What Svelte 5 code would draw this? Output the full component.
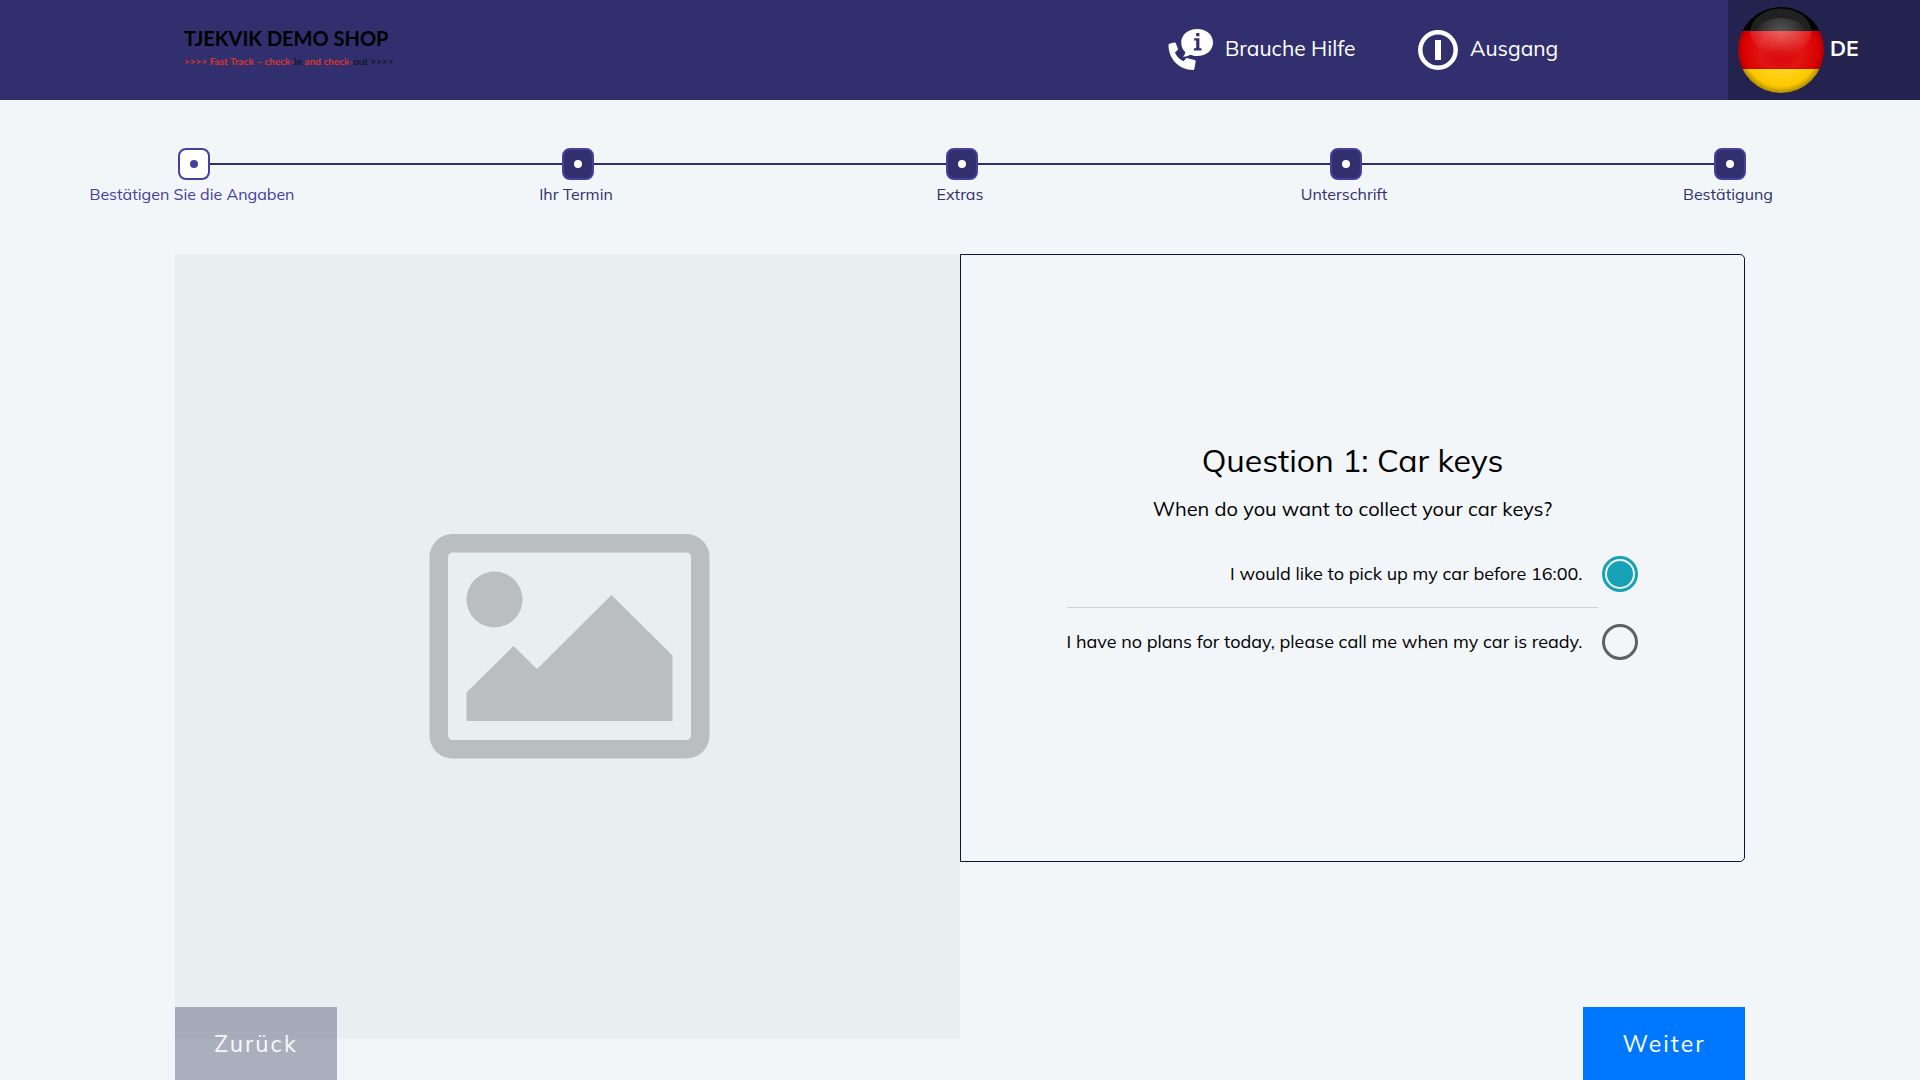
<script>
  const steps = ['Bestätigen Sie die Angaben', 'Ihr Termin', 'Extras', 'Unterschrift', 'Bestätigung'];
  const options = [
    'I would like to pick up my car before 16:00.',
    'I have no plans for today, please call me when my car is ready.'
  ];
  let current = $state(0);
  let choice = $state(0);
</script>

<header class="topbar">
  <div class="logo">
    <span class="logo-title">TJEKVIK DEMO SHOP</span>
    <span class="logo-tag">&gt;&gt;&gt;&gt; Fast Track – check-<i>in</i> and check-<i>out &gt;&gt;&gt;&gt;</i></span>
  </div>
  <nav class="actions">
    <button class="action" type="button">
      <svg width="45" height="42" viewBox="0 0 45 42" aria-hidden="true">
        <path fill="#fff" d="M29.200 0C38.300 0 45 5.800 45 13.500S38.300 27 29.200 27c-2.500 0-4.900-.4-7-1.300-1.800 1.200-4.500 2.100-7.300 2 1.200-1.200 2.200-2.800 2.500-4.500C14.600 20.800 13.200 17.300 13.200 13.500 13.200 5.800 20.100 0 29.200 0Z" />
        <path fill="#312f6e" d="M28.200 4h3.200v3.200h-3.200zM26.200 9.200h5.200v10h2.100v2.300h-7.600v-2.300h2.300v-7.600h-2z" />
        <path fill="#fff" d="M2 14.500 6.300 13.500c.8-.2 1.300.2 1.600.9l2 5.200c.2.700 0 1.200-.5 1.700l-2.500 2.200c1.800 4 4.700 6.900 8.700 8.700l2.300-2.600c.5-.5 1-.7 1.700-.4l7 1.900c.8.300 1.100.8 1 1.600l-1.200 7c-.2.800-.7 1.300-1.500 1.300C11.200 41 .5 30.300.5 16.100c0-.8.600-1.400 1.500-1.600Z" />
      </svg>
      <span>Brauche Hilfe</span>
    </button>
    <button class="action" type="button">
      <svg width="40" height="40" viewBox="0 0 40 40" aria-hidden="true">
        <circle cx="20" cy="20" r="17.700" fill="none" stroke="#fff" stroke-width="4.500" />
        <path fill="#fff" d="M17 10h6v20h-6z" />
      </svg>
      <span>Ausgang</span>
    </button>
  </nav>
  <button class="lang" type="button">
    <svg width="86" height="86" viewBox="0 0 86 86" aria-hidden="true">
      <defs>
        <clipPath id="disc"><circle cx="43" cy="43" r="43" /></clipPath>
        <radialGradient id="red" gradientUnits="userSpaceOnUse" cx="43" cy="43" r="43">
          <stop offset="0" stop-color="#d80000" />
          <stop offset="0.500" stop-color="#e11414" />
          <stop offset="0.850" stop-color="#dc0000" />
          <stop offset="1" stop-color="#ae0000" />
        </radialGradient>
        <radialGradient id="gold" gradientUnits="userSpaceOnUse" cx="43" cy="43" r="43">
          <stop offset="0.500" stop-color="#ffd21c" />
          <stop offset="0.850" stop-color="#fcc800" />
          <stop offset="1" stop-color="#b08c00" />
        </radialGradient>
        <linearGradient id="shine" gradientUnits="userSpaceOnUse" x1="0" y1="1" x2="0" y2="46">
          <stop offset="0" stop-color="#fff" stop-opacity="0.130" />
          <stop offset="0.500" stop-color="#fff" stop-opacity="0.130" />
          <stop offset="1" stop-color="#fff" stop-opacity="0" />
        </linearGradient>
        <radialGradient id="glow" gradientUnits="userSpaceOnUse" cx="43" cy="26" r="27">
          <stop offset="0" stop-color="#fff" stop-opacity="0.240" />
          <stop offset="0.450" stop-color="#fff" stop-opacity="0.140" />
          <stop offset="1" stop-color="#fff" stop-opacity="0" />
        </radialGradient>
      </defs>
      <g clip-path="url(#disc)">
        <path fill="#000" d="M0 0h86v24H0z" />
        <path fill="url(#red)" d="M0 24h86v38H0z" />
        <path fill="url(#gold)" d="M0 62h86v24H0z" />
        <path fill="#961000" opacity="0.500" d="M0 61h86v1H0z" />
        <ellipse cx="43" cy="25" rx="30.500" ry="23.500" fill="url(#shine)" />
        <ellipse cx="43" cy="31" rx="27" ry="20" fill="url(#glow)" />
      </g>
    </svg>
    <span>DE</span>
  </button>
</header>

<ol class="steps">
  {#each steps as step, i}
    <li class="step" class:active={i === current}>
      <div class="track"><span class="marker"></span></div>
      <span class="step-label">{step}</span>
    </li>
  {/each}
</ol>

<main class="content">
  <div class="picture">
    <svg viewBox="0 0 785 785" role="img" aria-label="Placeholder">
      <g fill="#babec1">
        <path fill-rule="evenodd" d="M277.500 280h234a23 23 0 0 1 23 23v178.500a23 23 0 0 1-23 23h-234a23 23 0 0 1-23-23V303a23 23 0 0 1 23-23ZM277.500 298.500a4.500 4.500 0 0 0-4.500 4.500v178.500a4.500 4.500 0 0 0 4.500 4.500h234a4.500 4.500 0 0 0 4.500-4.500V303a4.500 4.500 0 0 0-4.500-4.500Z" />
        <circle cx="319.500" cy="345.500" r="28" />
        <path d="M291.500 467v-28.500l47-46.500 23.500 23L436.500 341l61 60.500V467z" />
      </g>
    </svg>
  </div>
  <section class="question">
    <h1>Question 1: Car keys</h1>
    <p>When do you want to collect your car keys?</p>
    <div class="options">
      {#each options as option, i}
        <div class="option">
          <label for="option-{i}">{option}</label>
          <input id="option-{i}" type="radio" name="keys" value={i} bind:group={choice} />
        </div>
      {/each}
    </div>
  </section>
</main>

<footer class="bottom">
  <button class="nav-button back" type="button">Zurück</button>
  <button class="nav-button next" type="button">Weiter</button>
</footer>

<style>
  :global(*) {
    box-sizing: border-box;
  }
  :global(body) {
    background: #f2f6f9;
    color: #000;
    font-family: Muli, Mulish, 'Open Sans', sans-serif;
  }
  button {
    border: 0;
    font: inherit;
    color: #fff;
    cursor: pointer;
  }
  .topbar {
    display: flex;
    height: 100px;
    background: #312f6e;
  }
  .logo {
    display: flex;
    flex-direction: column;
    flex: 1;
    padding: 24px 0 0 184px;
    font-family: Lato, sans-serif;
    font-weight: 700;
    white-space: nowrap;
  }
  .logo-title {
    font-size: 20px;
    line-height: 28px;
  }
  .logo-tag {
    font-size: 10px;
    line-height: 18px;
    color: #d8362f;
  }
  .logo-tag i {
    font-style: normal;
    color: #15142c;
  }
  .actions {
    display: grid;
    grid-template-columns: 250px 310px;
  }
  .action {
    display: flex;
    align-items: center;
    gap: 12px;
    padding: 0;
    background: none;
    font-size: 21px;
    line-height: 28px;
  }
  .action span,
  .lang span {
    padding-bottom: 4px;
  }
  .lang {
    display: flex;
    align-items: center;
    gap: 6px;
    width: 10%;
    padding: 0 10px;
    background: #242350;
    font-size: 21px;
    font-weight: 700;
  }
  .steps {
    display: grid;
    grid-template-columns: repeat(5, 1fr);
    margin: 48px 0 0;
    padding: 0;
    list-style: none;
    overflow: hidden;
  }
  .step {
    text-align: center;
    color: #312f6e;
  }
  .track {
    display: flex;
    align-items: center;
  }
  .track::before,
  .track::after {
    content: '';
    flex: 1;
    height: 2px;
    background: #312f6e;
  }
  .track::before {
    padding-left: 4px;
  }
  .step:first-child .track::before,
  .step:last-child .track::after {
    background: none;
  }
  .marker {
    display: grid;
    place-items: center;
    width: 32px;
    height: 32px;
    border: 2px solid #4340a0;
    border-radius: 8px;
    background: #312f6e;
  }
  .marker::before {
    content: '';
    width: 8px;
    height: 8px;
    border-radius: 50%;
    background: #fff;
  }
  .active .marker {
    background: #fff;
  }
  .active .marker::before {
    background: #4340a0;
  }
  .active {
    color: #4340a0;
  }
  .step-label {
    display: block;
    font-size: 16px;
    line-height: 28px;
  }
  .content {
    display: grid;
    grid-template-columns: 1fr 1fr;
    align-items: start;
    max-width: 1600px;
    margin: 46px auto 0;
    padding: 0 15px;
  }
  .picture {
    aspect-ratio: 1;
    background: #e9eef1;
  }
  .picture svg {
    display: block;
    width: 100%;
  }
  .question {
    display: flex;
    flex-direction: column;
    align-items: center;
    justify-content: center;
    min-height: 608px;
    border: 1px solid #0d1440;
    border-radius: 0 5px 5px 0;
  }
  h1 {
    margin: 0;
    font-size: 32px;
    font-weight: 400;
    line-height: 40px;
  }
  p {
    margin: 14px 0 16px;
    font-size: 20px;
    line-height: 30px;
  }
  .option {
    display: flex;
    align-items: center;
    gap: 4px;
    height: 68px;
  }
  .option label {
    flex: 1;
    padding-right: 16px;
    font-size: 18px;
    line-height: 67px;
    text-align: right;
    border-bottom: 1px solid transparent;
  }
  .option:first-child label {
    border-color: #cdd2d6;
  }
  .option input {
    appearance: none;
    width: 36px;
    height: 36px;
    margin: 0;
    border: 3px solid #5f6061;
    border-radius: 50%;
  }
  .option input:checked {
    border-color: #17a2b8;
    padding: 2px;
    background: #17a2b8 content-box;
  }
  .bottom {
    position: fixed;
    bottom: 0;
    left: 0;
    right: 0;
    display: flex;
    justify-content: space-between;
    max-width: 1600px;
    margin: 0 auto;
    padding: 0 15px;
  }
  .nav-button {
    width: 162px;
    height: 73px;
    padding: 0;
    font-size: 23px;
    letter-spacing: 2px;
  }
  .back {
    background: #3f4664;
    opacity: 0.4;
  }
  .next {
    background: #07f;
  }
</style>
